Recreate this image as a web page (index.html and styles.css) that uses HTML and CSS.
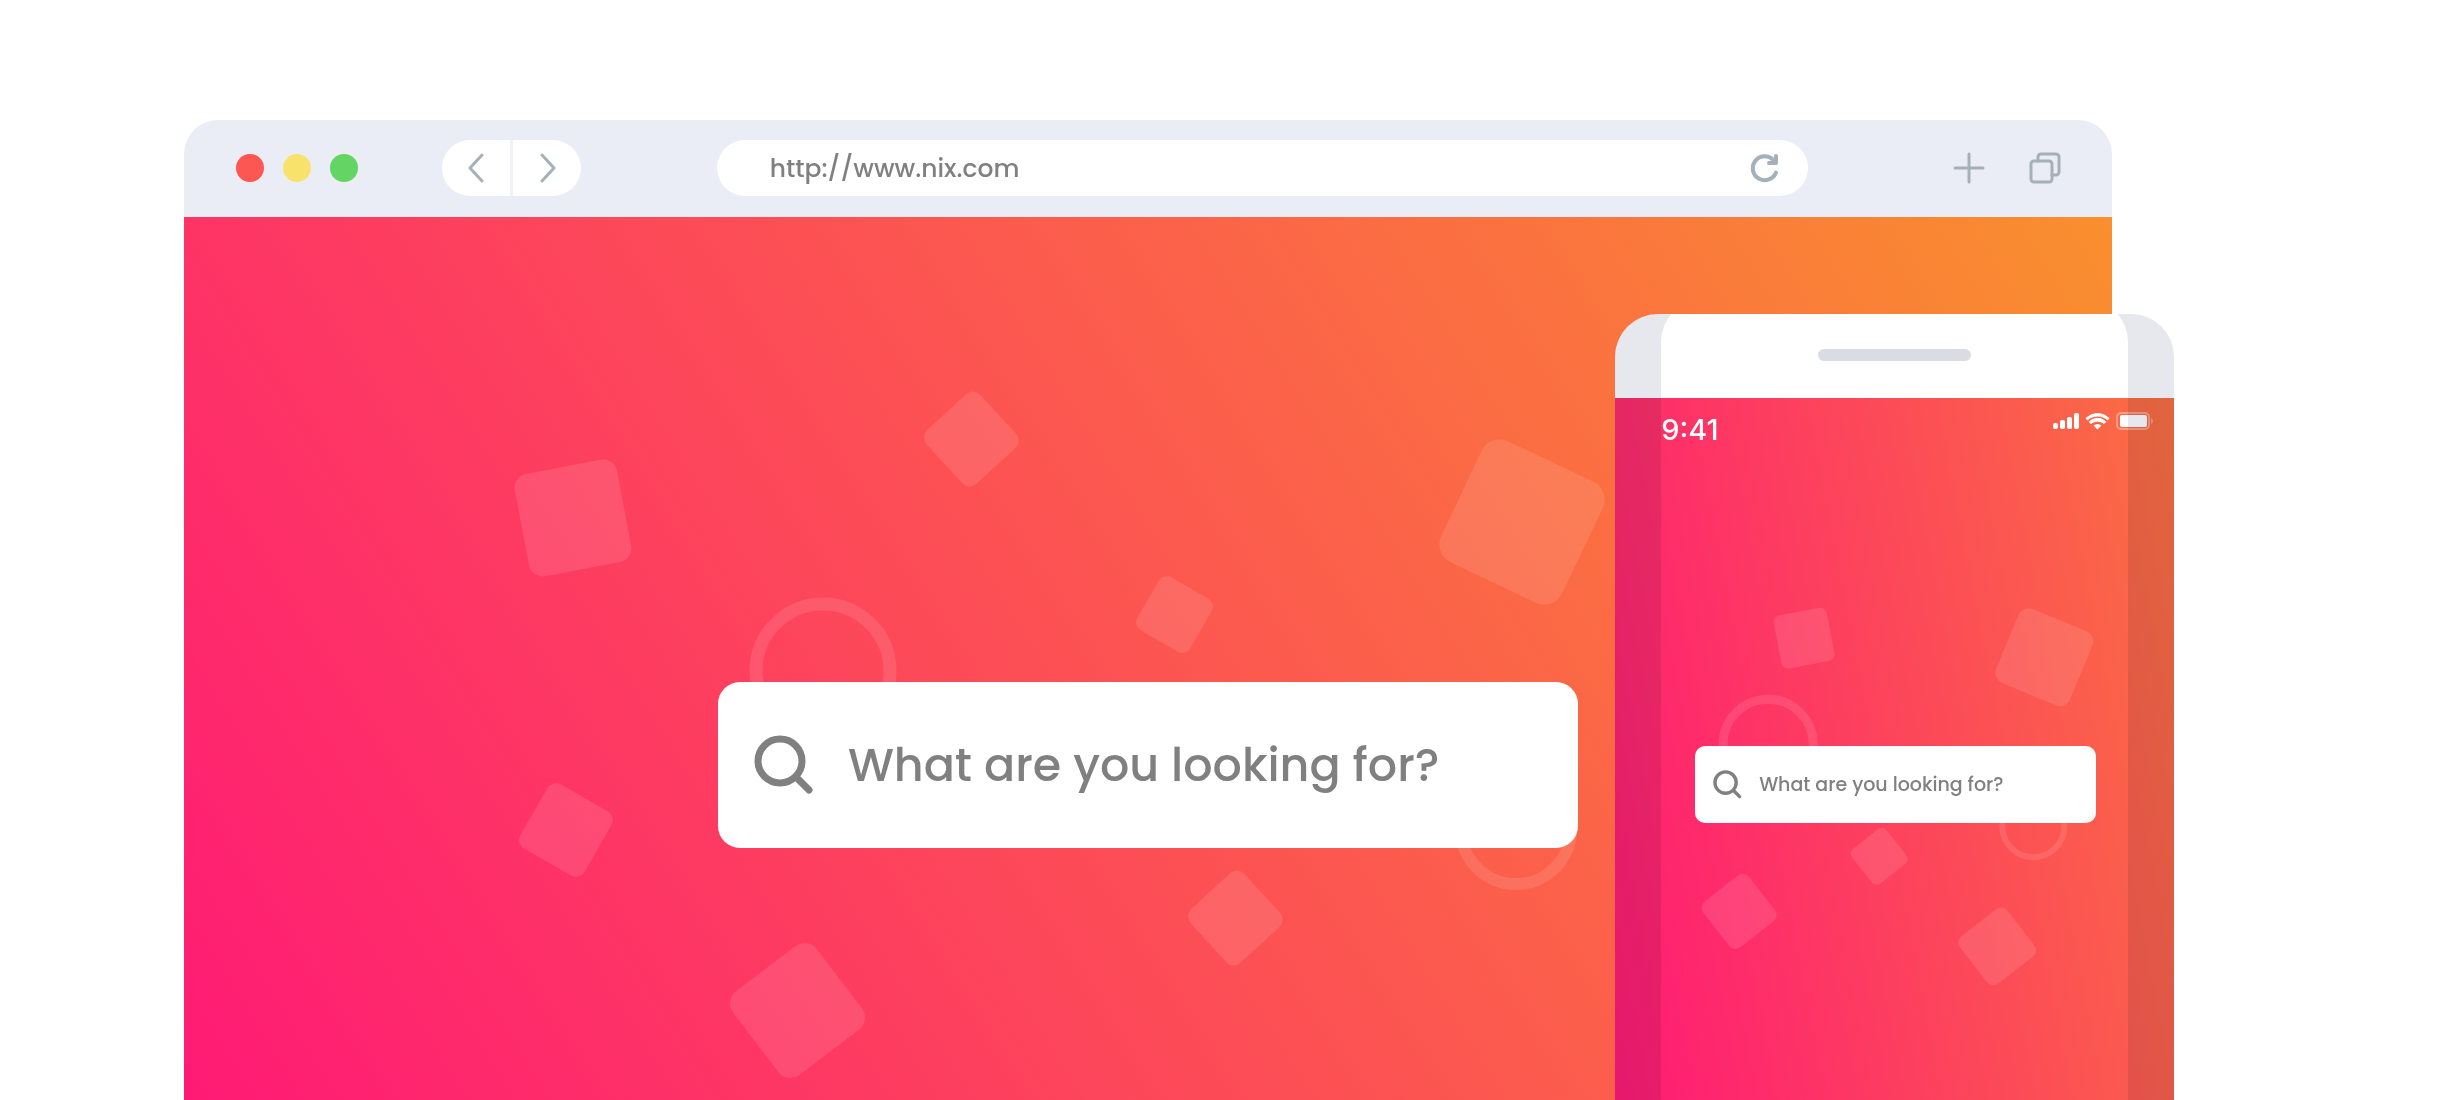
FILE: index.html
```html
<!DOCTYPE html>
<html lang="en">

<head>
    <meta charset="UTF-8">
    <meta name="viewport" content="width=device-width, initial-scale=1">
    <title>Nix</title>
    <link rel="stylesheet" href="styles.css">
</head>

<body>

    <main class="stage">

        <section class="browser">
            <header class="toolbar">
                <div class="dots">
                    <span class="dot red"></span>
                    <span class="dot yellow"></span>
                    <span class="dot green"></span>
                </div>

                <nav class="history">
                    <button aria-label="Back">
                        <svg width="20" height="32" viewBox="0 0 20 32"><path d="M16 3 L4 16 L16 29"/></svg>
                    </button>
                    <button aria-label="Forward">
                        <svg width="20" height="32" viewBox="0 0 20 32"><path d="M5 3 L17 16 L5 29"/></svg>
                    </button>
                </nav>

                <div class="address">
                    <input type="text" value="http://www.nix.com" aria-label="Address">
                    <button aria-label="Reload">
                        <svg width="32" height="32" viewBox="0 0 32 32"><path d="M27 20.500 A12 12 0 1 1 24 7.500 L27 10.500 M27 4 V11 H20"/></svg>
                    </button>
                </div>

                <div class="tools">
                    <button aria-label="New tab">
                        <svg width="32" height="32" viewBox="0 0 32 32"><path d="M16 2 V30 M2 16 H30"/></svg>
                    </button>
                    <button aria-label="Show tabs">
                        <svg width="32" height="32" viewBox="0 0 32 32">
                            <rect x="2" y="9" width="21" height="21" rx="3"/>
                            <path d="M9 9 V5 A3 3 0 0 1 12 2 H27 A3 3 0 0 1 30 5 V20 A3 3 0 0 1 27 23 H23"/>
                        </svg>
                    </button>
                </div>
            </header>

            <div class="page">
                <svg class="shapes" viewBox="0 0 1929 883" preserveAspectRatio="xMinYMin slice" aria-hidden="true">
                    <rect x="337" y="249" width="104" height="104" rx="14" transform="rotate(-10.7 389 301)"/>
                    <rect x="751" y="185" width="73" height="73" rx="10" transform="rotate(-42.6 788 222)"/>
                    <rect x="960" y="367" width="61" height="61" rx="9" transform="rotate(30 990.5 397.5)"/>
                    <rect x="1271" y="238" width="134" height="134" rx="20" transform="rotate(25.3 1338 305)"/>
                    <rect x="345" y="576" width="74" height="74" rx="10" transform="rotate(30 382 613)"/>
                    <rect x="561" y="741" width="105" height="105" rx="15" transform="rotate(-37.3 613.5 793.5)"/>
                    <rect x="1015" y="664" width="73" height="73" rx="10" transform="rotate(-42.6 1052 701)"/>
                    <circle cx="639" cy="454" r="67" stroke-width="13"/>
                    <circle cx="1332" cy="612" r="55" stroke-width="12"/>
                </svg>
                <form class="search">
                    <svg viewBox="0 0 60 60" aria-hidden="true"><circle cx="26" cy="26" r="22"/><path d="M43 43 L55 55"/></svg>
                    <input type="text" placeholder="What are you looking for?" aria-label="Search">
                </form>
            </div>
        </section>

        <section class="phone">
            <div class="speaker"></div>
            <div class="screen">
                <svg class="shapes" viewBox="0 0 558 702" preserveAspectRatio="xMinYMin slice" aria-hidden="true">
                    <rect x="162" y="213" width="54" height="54" rx="7" transform="rotate(-10.7 189 240)"/>
                    <rect x="389" y="219" width="80" height="80" rx="11" transform="rotate(22.5 429 259)"/>
                    <rect x="242" y="436" width="44" height="44" rx="6" transform="rotate(-38.5 264 458)"/>
                    <rect x="95" y="484" width="58" height="58" rx="8" transform="rotate(-38 124 513)"/>
                    <rect x="352" y="518" width="60" height="60" rx="8" transform="rotate(-38 382 548)"/>
                    <circle cx="153" cy="346" r="45" stroke-width="9"/>
                    <circle cx="418" cy="428" r="31" stroke-width="6"/>
                </svg>
                <div class="status">
                    <time>9:41</time>
                    <svg width="102" height="20" viewBox="0 0 102 20" aria-hidden="true">
                        <rect x="1" y="11" width="5" height="6" rx="2"/>
                        <rect x="8" y="8" width="5" height="9" rx="2"/>
                        <rect x="15" y="5" width="5" height="12" rx="2"/>
                        <rect x="22" y="1" width="5" height="16" rx="2"/>
                        <path d="M45.500 4 C49.500 4 53 5.500 55.600 7.900 L57 6.200 A16.500 16.500 0 0 0 34 6.200 L35.400 7.900 C38 5.500 41.500 4 45.500 4 Z" stroke="#fff"/>
                        <path d="M45.500 9.200 C48 9.200 50.300 10.100 52 11.600 L53.800 9.700 A12 12 0 0 0 37.200 9.700 L39 11.600 C40.700 10.100 43 9.200 45.500 9.200 Z" stroke="#fff"/>
                        <path d="M45.500 17.500 L49.400 13.500 A5.500 5.500 0 0 0 41.600 13.500 Z"/>
                        <rect class="battery" x="65" y="1" width="32" height="16" rx="4"/>
                        <rect x="68" y="3" width="27" height="12" rx="2"/>
                        <path class="cap" d="M99 6 Q101 7 101 9 Q101 11 99 12 Z"/>
                    </svg>
                </div>
                <form class="search small">
                    <svg viewBox="0 0 60 60" aria-hidden="true"><circle cx="26" cy="26" r="22"/><path d="M43 43 L55 55"/></svg>
                    <input type="text" placeholder="What are you looking for?" aria-label="Search on phone">
                </form>
            </div>
            <div class="edges"></div>
        </section>

    </main>

</body>

</html>
```

FILE: styles.css
```css
* {
    box-sizing: border-box;
    margin: 0;
    padding: 0;
}

body {
    background: #fff;
    font-family: Poppins, Inter, sans-serif;
}

button {
    display: flex;
    align-items: center;
    justify-content: center;
    border: none;
    background: none;
}

input {
    flex: 1;
    min-width: 0;
    border: none;
    outline: none;
    background: none;
    color: #808080;
    font-family: inherit;
    font-weight: 500;
}

.stage {
    position: relative;
    display: flex;
    height: 100vh;
    padding-top: 120px;
    overflow: hidden;
}

/* browser window */

.browser {
    display: flex;
    flex-direction: column;
    width: 78.75%;
    margin-left: 7.5%;
    border-radius: 34px 34px 0 0;
    overflow: hidden;
}

.toolbar {
    display: flex;
    align-items: center;
    height: 97px;
    padding: 0 51px 2px 52px;
    background: #eaedf5;
}

.toolbar svg {
    fill: none;
    stroke: #a6b0b8;
    stroke-width: 3;
    stroke-linecap: round;
    stroke-linejoin: round;
}

.dots {
    display: flex;
    gap: 19px;
}

.dot {
    width: 28px;
    height: 28px;
    border-radius: 50%;
}

.red {
    background: #fc5753;
}

.yellow {
    background: #f9e26c;
}

.green {
    background: #62d660;
}

.history {
    display: flex;
    gap: 3px;
    margin-left: 84px;
    border-radius: 28px;
    background: #eff3f7;
    overflow: hidden;
}

.history button {
    width: 68px;
    height: 56px;
    background: #fff;
}

.address {
    display: flex;
    align-items: center;
    flex: 1;
    height: 56px;
    margin: 0 145px 0 136px;
    padding: 0 27px 0 53px;
    border-radius: 28px;
    background: #fff;
}

.address input {
    padding-top: 2px;
    font-size: 25px;
}

.address svg {
    stroke-width: 4;
}

.tools {
    display: flex;
    gap: 44px;
}

/* coloured page */

.page {
    position: relative;
    flex: 1;
    padding: 465px 27.7% 0;
    background: linear-gradient(58deg, #ff1a75, #f98f2e);
}

.shapes {
    position: absolute;
    top: 0;
    left: 0;
    width: 100%;
    height: 100%;
    fill: rgba(255, 255, 255, 0.11);
}

.shapes circle {
    fill: none;
    stroke: rgba(255, 255, 255, 0.11);
}

.search {
    position: relative;
    display: flex;
    align-items: center;
    gap: 34px;
    height: 166px;
    padding: 0 36px;
    border-radius: 22px;
    background: #fff;
}

.search svg {
    width: 60px;
    height: 60px;
    fill: none;
    stroke: #808080;
    stroke-width: 7;
    stroke-linecap: round;
}

.search input {
    font-size: 46px;
}

.search input::placeholder {
    color: #808080;
    opacity: 1;
}

/* phone */

.phone {
    position: absolute;
    top: 314px;
    right: 11.25%;
    bottom: 0;
    display: flex;
    flex-direction: column;
    width: 22.8%;
    border-radius: 43px 43px 0 0;
    background: #fff;
    overflow: hidden;
}

.speaker {
    width: 153px;
    height: 12px;
    margin: 35px auto 37px;
    border-radius: 6px;
    background: #d9dce3;
}

.screen {
    position: relative;
    flex: 1;
    padding: 0 78px 0 80px;
    background: linear-gradient(79deg, #ff1a75, #fa6f42);
}

.status {
    position: relative;
    display: flex;
    justify-content: space-between;
    height: 348px;
    margin: 0 -58px 0 -34px;
    padding-top: 14px;
    color: #fff;
}

.status time {
    font-family: Inter, sans-serif;
    font-size: 29px;
    font-weight: 500;
    line-height: 36px;
}

.status svg {
    fill: #fff;
}

.status .battery {
    fill: none;
    stroke: rgba(255, 255, 255, 0.35);
    stroke-width: 2;
}

.status .cap {
    fill: rgba(255, 255, 255, 0.35);
}

.small {
    gap: 17px;
    height: 77px;
    padding: 0 18px;
    border-radius: 10px;
}

.small svg {
    width: 29px;
    height: 29px;
}

.small input {
    font-size: 19px;
}

/* shaded sides, the inner box stays clear */

.edges {
    position: absolute;
    top: -15px;
    right: 46px;
    bottom: -60px;
    left: 46px;
    border-radius: 43px;
    box-shadow: 0 0 0 60px #e6e8ed;
    mix-blend-mode: multiply;
    pointer-events: none;
}
```
